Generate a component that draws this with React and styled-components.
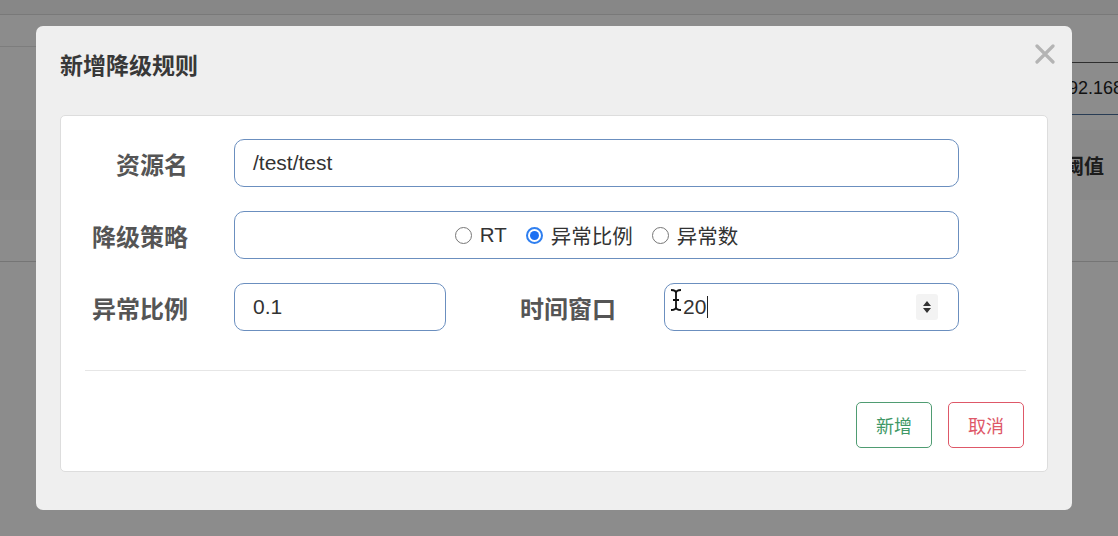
import React from "react";
import styled, { createGlobalStyle } from "styled-components";

const GlobalStyle = createGlobalStyle`
  html, body {
    margin: 0;
    padding: 0;
    width: 100%;
    height: 100%;
    overflow: hidden;
    background: #ffffff;
    font-family: "Liberation Sans", "Noto Sans CJK SC", sans-serif;
  }
`;

const Page = styled.div`
  width: 1220px;
  height: 536px;
  display: flex;
  flex-direction: column;
  background: #ffffff;
`;

const TopNav = styled.div`
  height: 14px;
  background: #f6f6f6;
  border-bottom: 1px solid #dcdcdc;
`;

const Crumb = styled.div`
  height: 31px;
  width: 300px;
  border-bottom: 1px solid #e3e3e3;
`;

const Toolbar = styled.div`
  display: flex;
  justify-content: flex-end;
  margin-top: 15px;
`;

const SearchBox = styled.div`
  width: 162px;
  height: 53px;
  box-sizing: border-box;
  display: flex;
  align-items: center;
  padding-left: 0;
  border-top: 1px solid #555;
  border-bottom: 1px solid #4a6e9a;
  font-size: 18px;
  color: #222;
  white-space: nowrap;
`;

const TableHead = styled.div`
  margin-top: 15px;
  height: 70px;
  display: flex;
  justify-content: flex-end;
  align-items: center;
  background: #f9f9f9;
`;

const HeadCell = styled.div`
  width: 156px;
  font-size: 20px;
  font-weight: 700;
  color: #333;
`;

const TableBody = styled.div`
  height: 61px;
  border-bottom: 1px solid #d6d6d6;
`;

const Mask = styled.div`
  position: fixed;
  inset: 0;
  background: rgba(0, 0, 0, 0.45);
`;

const Modal = styled.div`
  position: fixed;
  left: 36px;
  top: 26px;
  width: 1036px;
  height: 484px;
  box-sizing: border-box;
  background: #efefef;
  border-radius: 7px;
  display: flex;
  flex-direction: column;
  padding: 0 24px 40px;
`;

const ModalHeader = styled.div`
  height: 89px;
  flex-shrink: 0;
  display: flex;
  align-items: flex-start;
  justify-content: space-between;
`;

const Title = styled.h3`
  margin: 21px 0 0;
  font-size: 23px;
  line-height: 34px;
  font-weight: 700;
  color: #383838;
  font-family: "Noto Sans CJK SC", sans-serif;
`;

const CloseButton = styled.button`
  width: 24px;
  height: 24px;
  padding: 0;
  margin: 16px -9px 0 0;
  border: none;
  background: none;
  display: flex;
  align-items: center;
  justify-content: center;
  cursor: pointer;
`;

const Panel = styled.div`
  flex: 1;
  background: #ffffff;
  border: 1px solid #dddddd;
  border-radius: 5px;
  display: flex;
  flex-direction: column;
  padding: 23px 21px 23px 24px;
`;

const Form = styled.div`
  display: flex;
  flex-direction: column;
  gap: 24px;
  padding-right: 67px;
`;

const Row = styled.div`
  display: flex;
  align-items: center;
  height: 48px;
`;

const Label = styled.div`
  width: ${({ $w }) => $w || 103}px;
  flex-shrink: 0;
  text-align: right;
  font-size: 24px;
  font-weight: 600;
  color: #555;
  font-family: "Noto Sans CJK SC", sans-serif;
  margin-right: ${({ $gap }) => $gap || 46}px;
`;

const Field = styled.div`
  position: relative;
  flex: ${({ $w }) => ($w ? "none" : 1)};
  width: ${({ $w }) => ($w ? `${$w}px` : "auto")};
  height: 48px;
  box-sizing: border-box;
  border: 1.5px solid #6b8fbf;
  border-radius: 10px;
  background: #fff;
  display: flex;
  align-items: center;
  justify-content: ${({ $center }) => ($center ? "center" : "flex-start")};
  padding: 0 18px;
`;

const Value = styled.span`
  font-size: 21px;
  color: #333;
  font-family: "Liberation Sans", sans-serif;
`;

const Caret = styled.span`
  display: inline-block;
  width: 1px;
  height: 22px;
  background: #222;
  margin-left: 1px;
`;

const Spinner = styled.span`
  position: absolute;
  right: 20px;
  top: 50%;
  transform: translateY(-50%);
  width: 22px;
  height: 26px;
  background: #f3f3f3;
  border-radius: 3px;
  display: flex;
  align-items: center;
  justify-content: center;
`;

const MouseCursor = styled.svg`
  position: absolute;
  left: 4px;
  top: 4px;
`;

const RadioGroup = styled.div`
  display: flex;
  align-items: center;
  gap: 19px;
`;

const RadioItem = styled.label`
  display: flex;
  align-items: center;
  gap: 8px;
  font-size: 20.5px;
  color: #333;
  font-family: "Liberation Sans", "Noto Sans CJK SC", sans-serif;
`;

const RadioDot = styled.span`
  width: 17px;
  height: 17px;
  box-sizing: border-box;
  border-radius: 50%;
  border: ${({ $on }) => ($on ? "2px solid #2f7ff0" : "1px solid #777")};
  background: #fff;
  display: flex;
  align-items: center;
  justify-content: center;

  &::after {
    content: "";
    width: 9px;
    height: 9px;
    border-radius: 50%;
    background: ${({ $on }) => ($on ? "#1b6ff2" : "transparent")};
  }
`;

const Divider = styled.div`
  height: 1px;
  background: #e6e6e6;
  margin: 39px 0 31px;
`;

const Footer = styled.div`
  display: flex;
  justify-content: flex-end;
  gap: 16px;
  padding-right: 2px;
`;

const Button = styled.button`
  width: 76px;
  height: 46px;
  border-radius: 5px;
  background: #fff;
  font-size: 18px;
  font-family: "Noto Sans CJK SC", sans-serif;
  cursor: pointer;
  border: 1px solid ${({ $tone }) => ($tone === "danger" ? "#de5868" : "#4f9c72")};
  color: ${({ $tone }) => ($tone === "danger" ? "#de5868" : "#3f9866")};
`;

const strategies = [
  { label: "RT", on: false },
  { label: "异常比例", on: true },
  { label: "异常数", on: false },
];

export default function App() {
  return (
    <>
      <GlobalStyle />
      <Page>
        <TopNav />
        <Crumb />
        <Toolbar>
          <SearchBox>192.168.1.1</SearchBox>
        </Toolbar>
        <TableHead>
          <HeadCell>阈值</HeadCell>
        </TableHead>
        <TableBody />
      </Page>
      <Mask />
      <Modal>
        <ModalHeader>
          <Title>新增降级规则</Title>
          <CloseButton aria-label="close">
            <svg width="20" height="20" viewBox="0 0 20 20">
              <path d="M2 2 L18 18 M18 2 L2 18" stroke="#b4b4b4" strokeWidth="3.2" strokeLinecap="round" />
            </svg>
          </CloseButton>
        </ModalHeader>
        <Panel>
          <Form>
            <Row>
              <Label>资源名</Label>
              <Field>
                <Value>/test/test</Value>
              </Field>
            </Row>
            <Row>
              <Label>降级策略</Label>
              <Field $center>
                <RadioGroup>
                  {strategies.map((s) => (
                    <RadioItem key={s.label}>
                      <RadioDot $on={s.on} />
                      {s.label}
                    </RadioItem>
                  ))}
                </RadioGroup>
              </Field>
            </Row>
            <Row>
              <Label>异常比例</Label>
              <Field $w={212}>
                <Value>0.1</Value>
              </Field>
              <Label $w={170} $gap={48}>时间窗口</Label>
              <Field>
                <MouseCursor width="14" height="24" viewBox="0 0 14 24">
                  <path d="M2 2 Q7 2 7 5 Q7 2 12 2 M7 5 V19 M2 22 Q7 22 7 19 Q7 22 12 22 M4 12 H10" stroke="#111" strokeWidth="1.8" fill="none" />
                </MouseCursor>
                <Value>20</Value>
                <Caret />
                <Spinner>
                  <svg width="10" height="16" viewBox="0 0 10 16">
                    <path d="M1 7 L5 2 L9 7 Z M1 9 L5 14 L9 9 Z" fill="#333" />
                  </svg>
                </Spinner>
              </Field>
            </Row>
          </Form>
          <Divider />
          <Footer>
            <Button>新增</Button>
            <Button $tone="danger">取消</Button>
          </Footer>
        </Panel>
      </Modal>
    </>
  );
}
